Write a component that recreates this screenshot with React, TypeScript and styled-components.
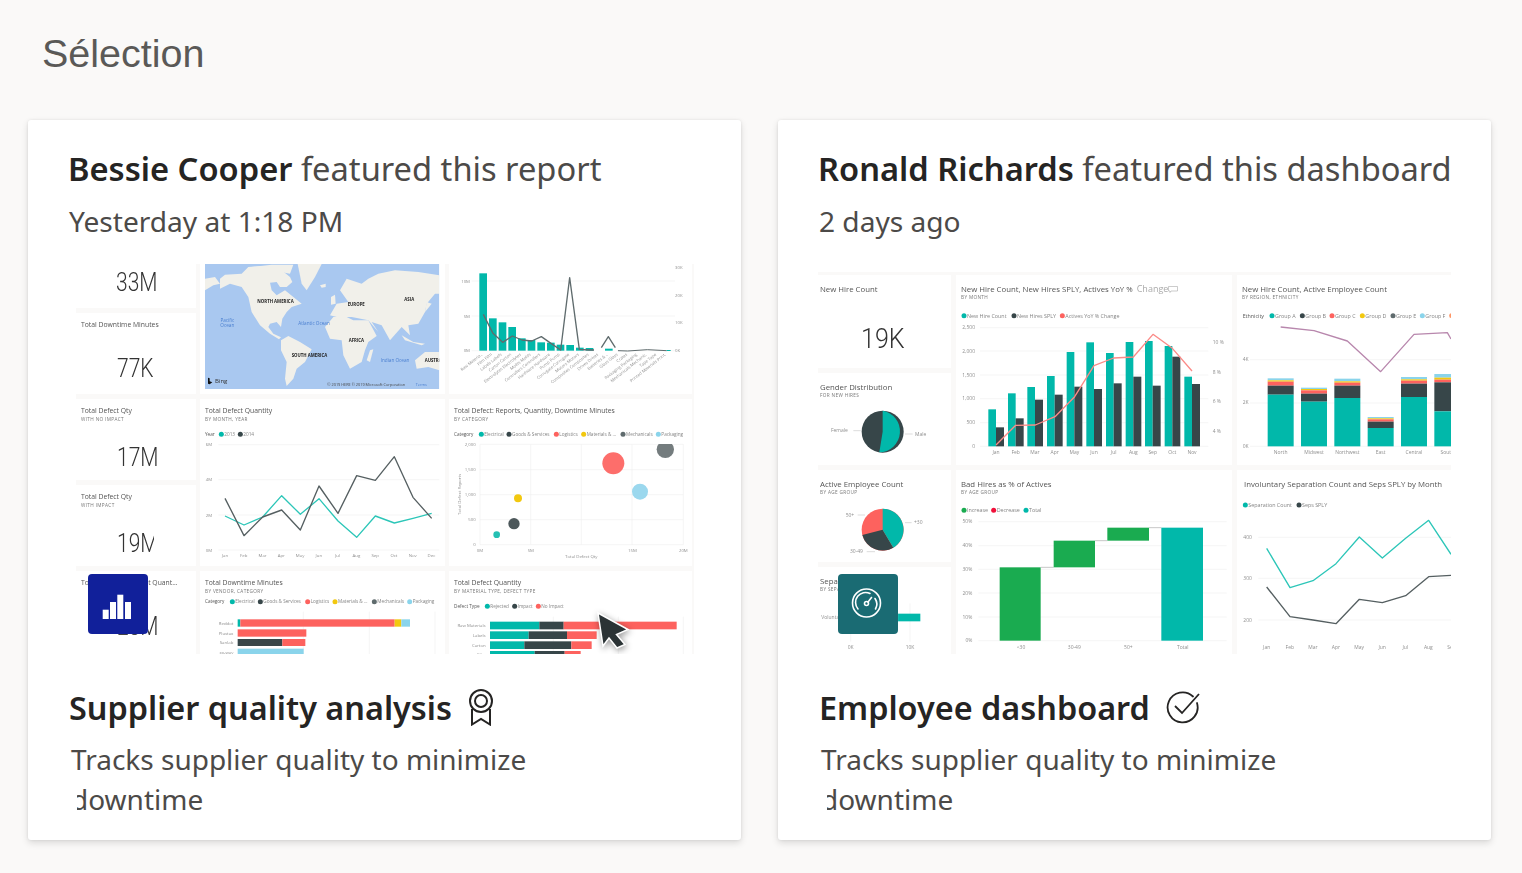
import React, { createContext, useContext } from 'react';
import styled, { createGlobalStyle } from 'styled-components';

const TEAL = '#01b8aa';
const DARK = '#374649';
const RED = '#fd625e';
const YELLOW = '#f2c80f';
const GREY = '#5f6b6d';
const BLUE = '#8ad4eb';
const GREEN = '#1aab50';

// the second thumbnail is a larger dashboard, its chart labels run bigger
const LabelScale = createContext(1);

const GlobalStyle = createGlobalStyle`
  html, body {
    margin: 0;
    height: 100%;
    background: #faf9f8;
    overflow: hidden;
  }
`;

const Page = styled.main`
  width: 1522px;
  height: 873px;
  box-sizing: border-box;
  padding: 28px 0 0 28px;
`;

const PageTitle = styled.h1`
  margin: 0 0 0 14px;
  height: 92px;
  font: 400 39.5px/50px 'Liberation Sans', Arial, sans-serif;
  color: #5a5957;
`;

const CardRow = styled.div`
  display: flex;
  gap: 37px;
`;

const Card = styled.article`
  width: 713px;
  height: 720px;
  box-sizing: border-box;
  padding-top: 29px;
  background: #fff;
  border-radius: 3px;
  box-shadow: 0 3px 7px rgba(0, 0, 0, 0.13), 0 0 3px rgba(0, 0, 0, 0.08);
  font-family: 'Noto Sans', 'Open Sans', sans-serif;
`;

const Headline = styled.div`
  margin-left: 40px;
  font-size: 32.65px;
  line-height: 40px;
  color: #4c4a48;
  white-space: nowrap;
`;

const Author = styled.strong`
  font-weight: 600;
  color: #252423;
`;

const When = styled.div`
  margin: 12px 0 0 41px;
  font-size: 28.1px;
  line-height: 40px;
  color: #4c4a48;
`;

const Thumb = styled.div<{ $left: number; $top: number; $pad: number; $width: number; $titleSize: number; $headPad: number }>`
  --title-size: ${p => p.$titleSize}px;
  --head-pad: ${p => p.$headPad}px;
  position: relative;
  display: flex;
  gap: 4px;
  box-sizing: border-box;
  margin: ${p => p.$top}px 0 0 ${p => p.$left}px;
  padding-top: ${p => p.$pad}px;
  width: ${p => p.$width}px;
  height: ${p => 413 - p.$top}px;
  overflow: hidden;
  background: #faf9f8;
  filter: blur(0.35px);
`;

const Column = styled.div<{ $gap?: number }>`
  display: flex;
  flex-direction: column;
  gap: 5px;
  margin-right: ${p => p.$gap ?? 0}px;
`;

const Frame = styled.section<{ $w: number; $h: number }>`
  width: ${p => p.$w}px;
  height: ${p => p.$h}px;
  flex: none;
  display: flex;
  flex-direction: column;
  overflow: hidden;
  background: #fff;
  font-family: 'Open Sans', 'Noto Sans', sans-serif;
`;

const TileHead = styled.header<{ $h: number; $inset: number }>`
  height: ${p => p.$h}px;
  flex: none;
  box-sizing: border-box;
  padding: var(--head-pad) 0 0 ${p => p.$inset}px;
`;

const TileTitle = styled.div`
  display: flex;
  align-items: center;
  font-size: var(--title-size);
  line-height: 10px;
  color: #555;
  white-space: nowrap;
`;

const Faded = styled.span`
  margin-left: 4px;
  font-size: 9px;
  color: #aaa;
`;

const TileSub = styled.div`
  font-size: 4.7px;
  line-height: 6px;
  letter-spacing: 0.35px;
  color: #777;
  white-space: nowrap;
`;

const KpiValue = styled.div<{ $bottom: number; $left: number; $clip?: number; $size: number; $squeeze: number }>`
  margin-top: auto;
  margin-left: ${p => p.$left}px;
  margin-bottom: ${p => p.$bottom - 16}px;
  width: ${p => p.$clip ?? 70}px;
  overflow: hidden;
  transform: scaleX(${p => p.$squeeze});
  transform-origin: left center;
  font-family: Roboto, 'Open Sans', sans-serif;
  font-size: ${p => p.$size}px;
  line-height: 32px;
  font-weight: 300;
  color: #333;
  white-space: nowrap;
`;

const ChartSvg = styled.svg`
  display: block;
  flex: none;
  font-family: 'Open Sans', 'Noto Sans', sans-serif;
`;

const Badge = styled.div<{ $bg: string; $left: number }>`
  position: absolute;
  left: ${p => p.$left}px;
  bottom: 20px;
  width: 60px;
  height: 60px;
  border-radius: 4px;
  background: ${p => p.$bg};
  box-shadow: 0 0 1px rgba(255, 255, 255, 0.8);
`;

const Cursor = styled.svg`
  position: absolute;
  left: 515px;
  top: 346px;
  filter: drop-shadow(1px 2px 3px rgba(0, 0, 0, 0.4));
`;

const ItemTitle = styled.h2<{ $gap: number }>`
  display: flex;
  align-items: center;
  gap: ${p => p.$gap}px;
  margin: 33px 0 0 41px;
  height: 40px;
  font-size: 32.4px;
  line-height: 40px;
  font-weight: 600;
  color: #252423;
`;

const Description = styled.p`
  margin: 12px 0 0 43px;
  font-size: 28px;
  line-height: 40px;
  color: #4c4a48;
`;

const ClippedLine = styled.span`
  display: block;
  clip-path: inset(0 0 0 6px);
`;

type Origin = [number, number];

const Tile: React.FC<{
  w: number;
  h: number;
  x: number;
  y: number;
  origin: Origin;
  head?: number;
  inset?: number;
  title?: React.ReactNode;
  sub?: string;
  children?: React.ReactNode;
}> = ({ w, h, x, y, origin, head = 24, inset = 5, title, sub, children }) => {
  // charts are plotted in the coordinates of a 3x crop of the thumbnail
  const vb = `${(x - origin[0]) * 3} ${(y + head - origin[1]) * 3} ${w * 3} ${(h - head) * 3}`;
  return (
    <Frame $w={w} $h={h}>
      {head > 0 && (
        <TileHead $h={head} $inset={inset}>
          <TileTitle>{title}</TileTitle>
          {sub && <TileSub>{sub}</TileSub>}
        </TileHead>
      )}
      <ChartSvg width={w} height={h - head} viewBox={vb} aria-hidden>
        {children}
      </ChartSvg>
    </Frame>
  );
};

const Kpi: React.FC<{
  w: number;
  h: number;
  title?: string;
  sub?: string;
  value: string;
  bottom: number;
  left: number;
  clip?: number;
  inset?: number;
  size?: number;
  squeeze?: number;
}> = ({ w, h, title, sub, value, bottom, left, clip, inset = 5, size = 25, squeeze = 0.84 }) => (
  <Frame $w={w} $h={h}>
    {title && (
      <TileHead $h={24} $inset={inset}>
        <TileTitle>{title}</TileTitle>
        {sub && <TileSub>{sub}</TileSub>}
      </TileHead>
    )}
    <KpiValue $bottom={bottom} $left={left} $clip={clip} $size={size} $squeeze={squeeze}>
      {value}
    </KpiValue>
  </Frame>
);

const Label: React.FC<{ x: number; y: number; end?: boolean; mid?: boolean; size?: number; fill?: string; bold?: boolean; children: React.ReactNode }> = ({
  x,
  y,
  end,
  mid,
  size = 13,
  fill = '#8f8f8f',
  bold,
  children,
}) => {
  const scale = useContext(LabelScale);
  const px = size * scale;
  return (
    <text x={x} y={y + px * 0.35} fontSize={px} fill={fill} fontWeight={bold ? 700 : 400} textAnchor={end ? 'end' : mid ? 'middle' : 'start'}>
      {children}
    </text>
  );
};

const Legend: React.FC<{ y: number; title?: [number, string]; items: [number, string, string][] }> = ({ y, title, items }) => (
  <g>
    {title && (
      <Label x={title[0]} y={y} fill="#555" size={14}>
        {title[1]}
      </Label>
    )}
    {items.map(([x, color, text]) => (
      <g key={x}>
        <circle cx={x} cy={y} r={7.5} fill={color} />
        <Label x={x + 9} y={y} size={14} fill="#858585">
          {text}
        </Label>
      </g>
    ))}
  </g>
);

const HGrid: React.FC<{ from: number; to: number; ys: number[] }> = ({ from, to, ys }) => (
  <g stroke="#f0f0f0" strokeWidth={2}>
    {ys.map(y => (
      <line key={y} x1={from} x2={to} y1={y} y2={y} />
    ))}
  </g>
);

const VGrid: React.FC<{ xs: number[]; from: number; to: number }> = ({ xs, from, to }) => (
  <g stroke="#f0f0f0" strokeWidth={2}>
    {xs.map(x => (
      <line key={x} x1={x} x2={x} y1={from} y2={to} />
    ))}
  </g>
);

const Line: React.FC<{ pts: number[][]; color: string; width?: number }> = ({ pts, color, width = 4 }) => (
  <polyline points={pts.map(p => p.join(',')).join(' ')} fill="none" stroke={color} strokeWidth={width} strokeLinejoin="round" />
);

const Bar: React.FC<{ x0: number; x1: number; y0: number; y1: number; fill: string }> = ({ x0, x1, y0, y1, fill }) => (
  <rect x={x0} y={y0} width={x1 - x0} height={y1 - y0} fill={fill} />
);

const MONTHS = ['Jan', 'Feb', 'Mar', 'Apr', 'May', 'Jun', 'Jul', 'Aug', 'Sep', 'Oct', 'Nov', 'Dec'];

const LAND = [
  '0,50 30,45 45,65 25,70 0,85',
  '45,50 60,38 110,35 130,15 170,12 230,25 255,45 262,60 245,75 225,75 215,60 195,62 200,85 215,100 240,85 265,105 290,125 260,135 245,150 232,170 228,195 215,180 195,185 190,195 205,215 228,226 222,232 195,215 165,190 140,150 130,105 110,75 75,65 45,80',
  '140,15 200,8 265,8 255,35 200,25',
  '278,6 350,6 330,45 305,85 290,65',
  '345,70 362,65 362,75 350,77',
  '378,105 390,98 392,125 378,128',
  '228,235 250,222 285,240 320,262 300,300 275,320 265,350 245,372 240,350 245,300 228,265',
  '360,195 385,165 425,165 445,175 490,175 515,222 490,240 480,265 470,300 435,320 415,280 410,235 375,230',
  '375,160 395,125 430,120 405,85 425,50 470,65 490,50 520,35 570,25 640,30 703,40 703,95 690,95 665,125 660,150 640,185 610,190 615,220 590,195 555,235 530,190 500,180 520,210 490,175 440,165 395,165',
  '495,265 505,262 495,300 485,295',
  '665,120 680,125 660,150',
  '590,220 625,240 660,245 650,250 600,235',
  '630,295 660,270 703,270 703,325 670,315 635,320',
];

const WorldMap = () => (
  <g>
    <rect x={0} y={6} width={703} height={375} fill="#a9c8f0" />
    <g fill="#f1f0ea">
      {LAND.map(pts => (
        <polygon key={pts} points={pts} />
      ))}
    </g>
    <Label x={157} y={117} fill="#222" size={13} bold>NORTH AMERICA</Label>
    <Label x={428} y={126} fill="#222" size={13} bold>EUROPE</Label>
    <Label x={598} y={111} fill="#222" size={13} bold>ASIA</Label>
    <Label x={431} y={235} fill="#222" size={13} bold>AFRICA</Label>
    <Label x={260} y={281} fill="#222" size={13} bold>SOUTH AMERICA</Label>
    <Label x={659} y={294} fill="#222" size={13} bold>AUSTRALIA</Label>
    <rect x={703} y={6} width={30} height={380} fill="#fff" />
    <Label x={67} y={174} fill="#4a7fd0" size={14} mid>Pacific</Label>
    <Label x={67} y={191} fill="#4a7fd0" size={14} mid>Ocean</Label>
    <Label x={280} y={183} fill="#4a7fd0" size={14}>Atlantic Ocean</Label>
    <Label x={527} y={294} fill="#4a7fd0" size={14}>Indian Ocean</Label>
    <path d="M9 347l5 2v9l8 3-8 6-5-2z" fill="#111" />
    <Label x={30} y={357} fill="#333" size={18}>Bing</Label>
    <Label x={367} y={367} fill="#444" size={11.500}>© 2019 HERE © 2019 Microsoft Corporation</Label>
    <Label x={632} y={367} fill="#4a7fd0" size={11.500}>Terms</Label>
  </g>
);

const PARTS = ['Raw Materia..', 'Film Film', 'Labels Labels', 'Carton Carton', 'Electrolytes Electrolytes', 'Molds Molds', 'Controllers Controllers', 'Hardware Hardware', 'Pump Pump', 'Corrugate Corrugate', 'Motors Motors', 'Composites Composites', 'Drives Drives', 'Batteries & ..', 'Glass Glass', 'Crates', 'Packaging Packaging', 'Mechanicals Mechanic.', 'Tape Tape', 'Printed Materials Print.'];
const PART_TOPS = [55, 190, 202, 216, 250, 255, 262, 263, 269, 270, 278, 279];

const ParetoChart = () => (
  <g>
    <HGrid from={95} to={705} ys={[78, 183, 287]} />
    <Label x={90} y={78} end>10M</Label>
    <Label x={90} y={183} end>5M</Label>
    <Label x={90} y={287} end>0M</Label>
    <Label x={705} y={37}>30K</Label>
    <Label x={705} y={120}>20K</Label>
    <Label x={705} y={203}>10K</Label>
    <Label x={705} y={287}>0K</Label>
    {PART_TOPS.map((top, i) => (
      <Bar key={i} x0={118 + i * 29} x1={141 + i * 29} y0={top} y1={287} fill={TEAL} />
    ))}
    <Line
      color={GREY}
      pts={[[130, 178], [159, 235], [188, 262], [217, 243], [246, 255], [275, 258], [304, 245], [333, 265], [362, 285], [389, 68], [418, 283], [447, 285], [476, 285]]}
    />
    <rect x={462} y={235} width={70} height={70} fill="#fff" />
    <Bar x0={495} x1={518} y0={281} y1={287} fill={TEAL} />
    <Line color={GREY} pts={[[484, 278], [505, 245], [526, 278]]} />
    <Line color={GREY} pts={[[534, 287], [563, 288], [622, 284], [680, 287]]} width={3} />
    <Bar x0={680} x1={692} y0={285} y1={288} fill={TEAL} />
    {PARTS.map((t, i) => (
      <text key={t} x={128 + i * 29} y={300} fontSize={12.5} fill="#959595" textAnchor="end" transform={`rotate(-38 ${128 + i * 29} 300)`}>
        {t}
      </text>
    ))}
  </g>
);

const DefectLine = () => (
  <g>
    <Legend y={538} title={[435, 'Year']} items={[[484, TEAL, '2013'], [541, DARK, '2014']]} />
    <HGrid from={475} to={1138} ys={[569, 674, 780, 885]} />
    {['6M', '4M', '2M', '0M'].map((t, i) => (
      <Label key={t} x={437} y={[569, 674, 780, 885][i]}>{t}</Label>
    ))}
    {MONTHS.map((m, i) => (
      <Label key={m} x={495 + i * 56.3} y={902} mid>{m}</Label>
    ))}
    <Line color="#2cc6b8" pts={[[495, 783], [552, 810], [608, 786], [665, 722], [721, 778], [777, 731], [834, 798], [890, 847], [946, 783], [1003, 804], [1059, 790], [1115, 775]]} />
    <Line color="#555f61" pts={[[495, 730], [552, 842], [608, 786], [665, 765], [721, 825], [777, 693], [834, 775], [890, 662], [946, 676], [1003, 605], [1059, 727], [1115, 790]]} />
  </g>
);

const VendorBars = () => (
  <g>
    <Legend
      y={1040}
      title={[435, 'Category']}
      items={[[517, TEAL, 'Electrical'], [601, DARK, 'Goods & Services'], [743, RED, 'Logistics'], [825, YELLOW, 'Materials & ...'], [943, GREY, 'Mechanicals'], [1049, BLUE, 'Packaging']]}
    />
    <VGrid xs={[730, 928, 1125]} from={1070} to={1200} />
    <Label x={520} y={1104} end>Reddot</Label>
    <Label x={520} y={1134} end>Plustax</Label>
    <Label x={520} y={1163} end>Sanlab</Label>
    <Label x={520} y={1192} end>xx-way</Label>
    <Bar x0={533} x1={541} y0={1093} y1={1115} fill={TEAL} />
    <Bar x0={541} x1={1004} y0={1093} y1={1115} fill={RED} />
    <Bar x0={1004} x1={1024} y0={1093} y1={1115} fill={YELLOW} />
    <Bar x0={1024} x1={1050} y0={1093} y1={1115} fill={BLUE} />
    <Bar x0={533} x1={739} y0={1123} y1={1145} fill={RED} />
    <Bar x0={533} x1={667} y0={1152} y1={1173} fill={DARK} />
    <Bar x0={667} x1={736} y0={1152} y1={1173} fill={RED} />
    <Bar x0={533} x1={731} y0={1181} y1={1198} fill={BLUE} />
  </g>
);

const Scatter = () => (
  <g>
    <HGrid from={120} to={730} ys={[568, 644, 719, 794, 869]} />
    <VGrid xs={[120, 272, 424, 576, 730]} from={568} to={869} />
    <circle cx={676} cy={583} r={26} fill="#747c7e" />
    <rect x={640} y={545} width={80} height={22} fill="#fff" />
    <Legend
      y={538}
      title={[42, 'Category']}
      items={[[124, TEAL, 'Electrical'], [207, DARK, 'Goods & Services'], [349, RED, 'Logistics'], [431, YELLOW, 'Materials & ...'], [549, GREY, 'Mechanicals'], [655, BLUE, 'Packaging']]}
    />
    {['2,000', '1,500', '1,000', '500', '0'].map((t, i) => (
      <Label key={t} x={107} y={568 + i * 75.3} end>{t}</Label>
    ))}
    {['0M', '5M', '', '15M', '20M'].map((t, i) => (
      <Label key={i} x={120 + i * 152.5} y={885} mid>{t}</Label>
    ))}
    <Label x={424} y={905} mid>Total Defect Qty</Label>
    <text x={62} y={718} fontSize={13} fill="#8f8f8f" textAnchor="middle" transform="rotate(-90 62 718)">Total Defect Reports</text>
    <circle cx={520} cy={625} r={33} fill="#fd6e6b" />
    <circle cx={600} cy={710} r={24} fill="#9bd8ee" />
    <circle cx={234} cy={730} r={12} fill={YELLOW} />
    <circle cx={222} cy={806} r={17} fill="#4d585b" />
    <circle cx={170} cy={839} r={10} fill="#25c0b3" />
  </g>
);

const MaterialBars = () => {
  const rows: [string, number, number, number, number, number][] = [
    ['Raw Materials', 1100, 1123, 298, 371, 710],
    ['Labels', 1129, 1152, 266, 381, 470],
    ['Carton', 1159, 1182, 253, 394, 455],
    ['Film', 1188, 1211, 284, 374, 422],
  ];
  return (
    <g>
      <Legend y={1054} title={[42, 'Defect Type']} items={[[142, TEAL, 'Rejected'], [224, DARK, 'Impact'], [295, RED, 'No Impact']]} />
      <VGrid xs={[340, 535, 730]} from={1085} to={1200} />
      {rows.map(([name, y0, y1, a, b, c]) => (
        <g key={name}>
          <Label x={137} y={(y0 + y1) / 2} end>{name}</Label>
          <Bar x0={150} x1={a} y0={y0} y1={y1} fill={TEAL} />
          <Bar x0={a} x1={b} y0={y0} y1={y1} fill={DARK} />
          <Bar x0={b} x1={c} y0={y0} y1={y1} fill={RED} />
        </g>
      ))}
    </g>
  );
};

const GenderPie = () => (
  <g>
    <circle cx={218} cy={500} r={63} fill={DARK} />
    <path d="M218 500V437A63 63 0 0 1 208 562Z" fill={TEAL} />
    <Label x={63} y={497}>Female</Label>
    <Label x={315} y={507}>Male</Label>
    <path d="M130 497h22M285 507h23" stroke="#ccc" strokeWidth={2} />
  </g>
);

const HIRES: [number, number, number][] = [
  [535, 433, 487], [594, 385, 460], [652, 366, 404], [711, 333, 389], [770, 261, 365], [829, 232, 372],
  [888, 264, 355], [947, 231, 335], [1005, 228, 362], [1064, 243, 275], [1123, 335, 357],
];

const HireBars = () => (
  <g>
    <Legend y={152} items={[[462, TEAL, 'New Hire Count'], [612, DARK, 'New Hires SPLY'], [757, RED, 'Actives YoY % Change']]} />
    <HGrid from={510} to={1195} ys={[188, 258, 330, 401, 473, 544]} />
    {['2,500', '2,000', '1,500', '1,000', '500', '0'].map((t, i) => (
      <Label key={t} x={495} y={[188, 258, 330, 401, 473, 543][i]} end>{t}</Label>
    ))}
    {['10 %', '8 %', '6 %', '4 %'].map((t, i) => (
      <Label key={t} x={1208} y={[231, 321, 410, 499][i]}>{t}</Label>
    ))}
    {HIRES.map(([x, a, b], i) => (
      <g key={x}>
        <Bar x0={x} x1={x + 23} y0={a} y1={544} fill={TEAL} />
        <Bar x0={x + 23} x1={x + 47} y0={b} y1={544} fill={DARK} />
        <Label x={x + 23} y={563} mid>{MONTHS[i]}</Label>
      </g>
    ))}
    <Line color="#fb8a87" width={4} pts={[[558, 540], [617, 481], [676, 480], [735, 455], [794, 395], [852, 302], [911, 279], [970, 276], [1029, 208], [1087, 250], [1146, 318]]} />
  </g>
);

const STACKS: [string, number, number[]][] = [
  ['North', 113, [389, 362, 350, 346, 340]],
  ['Midwest', 213, [410, 386, 376, 372, 368]],
  ['Northwest', 313, [399, 362, 353, 349, 341]],
  ['East', 413, [489, 470, 463, 460, 456]],
  ['Central', 513, [396, 356, 347, 343, 336]],
  ['South', 613, [439, 352, 344, 338, 327]],
];

const RegionStack = () => (
  <g>
    <Legend
      y={152}
      title={[38, 'Ethnicity']}
      items={[[126, TEAL, 'Group A'], [217, DARK, 'Group B'], [306, RED, 'Group C'], [397, YELLOW, 'Group D'], [489, GREY, 'Group E'], [577, BLUE, 'Group F'], [665, '#fe9666', '']]}
    />
    <HGrid from={60} to={663} ys={[284, 414, 544]} />
    <Label x={38} y={283}>4K</Label>
    <Label x={38} y={413}>2K</Label>
    <Label x={38} y={543}>0K</Label>
    {STACKS.map(([name, x, [a, b, c, d, e]]) => (
      <g key={name}>
        <Bar x0={x} x1={x + 78} y0={e} y1={d} fill={BLUE} />
        <Bar x0={x} x1={x + 78} y0={d} y1={c} fill={YELLOW} />
        <Bar x0={x} x1={x + 78} y0={c} y1={b} fill={RED} />
        <Bar x0={x} x1={x + 78} y0={b} y1={a} fill={DARK} />
        <Bar x0={x} x1={x + 78} y0={a} y1={544} fill={TEAL} />
        <Label x={x + 39} y={563} mid>{name}</Label>
      </g>
    ))}
    <Line color="#b887ad" pts={[[152, 186], [252, 197], [352, 228], [452, 320], [552, 208], [652, 203], [663, 222]]} />
  </g>
);

const AgePie = () => (
  <g>
    <circle cx={218} cy={194} r={63} fill={RED} />
    <path d="M218 194L157 210A63 63 0 0 0 250 248Z" fill={DARK} />
    <path d="M218 194V131A63 63 0 0 1 250 248Z" fill={TEAL} />
    <Label x={107} y={150}>50+</Label>
    <Label x={312} y={172}>+30</Label>
    <Label x={120} y={260}>30-49</Label>
    <path d="M143 150h22M285 173h20M170 260h25" stroke="#ccc" strokeWidth={2} />
  </g>
);

const SeparationBar = () => (
  <g>
    <VGrid xs={[122, 300]} from={415} to={530} />
    <Label x={34} y={457}>Voluntary</Label>
    <Bar x0={122} x1={331} y0={446} y1={469} fill={TEAL} />
    <Label x={122} y={547} mid>0K</Label>
    <Label x={300} y={547} mid>10K</Label>
  </g>
);

const Waterfall = () => (
  <g>
    <Legend y={136} items={[[462, GREEN, 'Increase'], [551, '#f0103a', 'Decrease'], [648, TEAL, 'Total']]} />
    <HGrid from={505} to={1250} ys={[170, 242, 313, 384, 456, 527]} />
    {['50%', '40%', '30%', '20%', '10%', '0%'].map((t, i) => (
      <Label key={t} x={487} y={[170, 242, 313, 384, 456, 527][i]} end>{t}</Label>
    ))}
    <path d="M692 307h39M855 227h37M1017 188h37" stroke="#aaa" strokeWidth={2} />
    <Bar x0={569} x1={692} y0={307} y1={527} fill={GREEN} />
    <Bar x0={731} x1={855} y0={227} y1={307} fill={GREEN} />
    <Bar x0={892} x1={1017} y0={188} y1={227} fill={GREEN} />
    <Bar x0={1054} x1={1179} y0={188} y1={527} fill={TEAL} />
    <Label x={633} y={547} mid>&lt;30</Label>
    <Label x={793} y={547} mid>30-49</Label>
    <Label x={955} y={547} mid>50+</Label>
    <Label x={1118} y={547} mid>Total</Label>
  </g>
);

const SeparationLines = () => (
  <g>
    <Legend y={720} items={[[46, TEAL, 'Separation Count'], [207, DARK, 'Seps SPLY']]} />
    <HGrid from={85} to={663} ys={[817, 940, 1065]} />
    <Label x={40} y={817}>400</Label>
    <Label x={40} y={940}>300</Label>
    <Label x={40} y={1065}>200</Label>
    {MONTHS.slice(0, 9).map((m, i) => (
      <Label key={m} x={110 + i * 69.3} y={1147} mid>{m}</Label>
    ))}
    <Line color="#2cc6b8" pts={[[110, 850], [180, 968], [249, 947], [318, 896], [388, 816], [457, 879], [527, 820], [596, 766], [663, 868]]} />
    <Line color="#555f61" pts={[[110, 966], [180, 1055], [249, 1065], [318, 1076], [388, 1003], [457, 1013], [527, 992], [596, 935], [663, 931]]} />
  </g>
);

const ReportIcon = () => (
  <svg width="60" height="60" viewBox="0 0 60 60" fill="#fff">
    <rect x="14.7" y="35.7" width="6" height="9.3" />
    <rect x="22" y="28" width="6" height="17" />
    <rect x="29.3" y="20.7" width="6" height="24.3" />
    <rect x="37" y="28" width="6" height="17" />
  </svg>
);

const GaugeIcon = () => (
  <svg width="60" height="60" viewBox="0 0 60 60" fill="none" stroke="#fff" strokeWidth="1.6" strokeLinecap="round">
    <circle cx="28.5" cy="29" r="14" />
    <path d="M20 35a10 10 0 0 1 12-15.500M37 24.500a10 10 0 0 1 .5 10.500" />
    <circle cx="28.5" cy="29.500" r="2" />
    <path d="M30 28l3.500-4.500" />
  </svg>
);

const CommentIcon = () => (
  <svg width="10" height="7" viewBox="0 0 10 7" fill="none" stroke="#aaa" strokeWidth="0.6">
    <path d="M.5.5h9v4.500h-6.500l-1 1.500v-1.500h-1.500z" />
  </svg>
);

const MedalIcon = () => (
  <svg width="26" height="37" viewBox="0 0 26 37" fill="none" stroke="#252423" strokeWidth="2">
    <circle cx="13" cy="12" r="11" />
    <circle cx="13" cy="12" r="6" />
    <path d="M4 20v15.500l9-5.500 9 5.500V20" />
  </svg>
);

const ApprovedIcon = () => (
  <svg width="34" height="34" viewBox="0 0 34 34" fill="none" stroke="#252423" strokeWidth="1.8">
    <path d="M27 6.500A15 15 0 1 0 31 13" strokeLinecap="round" />
    <path d="M9 16l7 7L33 4" />
  </svg>
);

const App: React.FC = () => {
  const MAP: Origin = [205, 262];
  const L: Origin = [60, 255];
  const M: Origin = [440, 255];
  const R1: Origin = [810, 265];
  const R2: Origin = [810, 465];
  const R3: Origin = [1230, 265];

  return (
    <Page>
      <GlobalStyle />
      <PageTitle>Sélection</PageTitle>
      <CardRow>
        <Card>
          <Headline>
            <Author>Bessie Cooper</Author> featured this report
          </Headline>
          <When>Yesterday at 1:18 PM</When>
          <Thumb $left={48} $top={23} $pad={0} $width={618} $titleSize={6.8} $headPad={7}>
            <Column>
              <Kpi w={120} h={44} value="33M" bottom={25} left={40} />
              <Kpi w={120} h={81} title="Total Downtime Minutes" value="77K" bottom={25} left={41} />
              <Kpi w={120} h={81} title="Total Defect Qty" sub="WITH NO IMPACT" value="17M" bottom={22} left={41} />
              <Kpi w={120} h={81} title="Total Defect Qty" sub="WITH IMPACT" value="19M" bottom={22} left={41} clip={44} />
              <Kpi w={120} h={83} title="Total Impacted Defect Quant..." value="23M" bottom={27} left={41} />
            </Column>
            <Column>
              <Tile w={245} h={130} x={200} y={264} origin={MAP} head={0}>
                <WorldMap />
              </Tile>
              <Tile w={245} h={167} x={200} y={399} origin={L} title="Total Defect Quantity" sub="BY MONTH, YEAR">
                <DefectLine />
              </Tile>
              <Tile w={245} h={83} x={200} y={571} origin={L} title="Total Downtime Minutes" sub="BY VENDOR, CATEGORY">
                <VendorBars />
              </Tile>
            </Column>
            <Column>
              <Tile w={243} h={130} x={449} y={264} origin={M} head={0}>
                <ParetoChart />
              </Tile>
              <Tile w={243} h={167} x={449} y={399} origin={M} title="Total Defect: Reports, Quantity, Downtime Minutes" sub="BY CATEGORY">
                <Scatter />
              </Tile>
              <Tile w={243} h={83} x={449} y={571} origin={M} title="Total Defect Quantity" sub="BY MATERIAL TYPE, DEFECT TYPE">
                <MaterialBars />
              </Tile>
            </Column>
            <Badge $bg="#11209a" $left={12}>
              <ReportIcon />
            </Badge>
            <Cursor width="46" height="46" viewBox="0 0 46 46">
              <path d="M7 3l30 16.500-11.500 5 8.500 10-8 3.500-8-10-6 8z" fill="#2b3335" stroke="#fff" strokeWidth="1.5" />
            </Cursor>
          </Thumb>
          <ItemTitle $gap={16}>
            Supplier quality analysis
            <MedalIcon />
          </ItemTitle>
          <Description>
            Tracks supplier quality to minimize
            <ClippedLine>downtime</ClippedLine>
          </Description>
        </Card>

        <Card>
          <Headline>
            <Author>Ronald Richards</Author> featured this dashboard
          </Headline>
          <When>2 days ago</When>
          <LabelScale.Provider value={1.15}>
            <Thumb $left={40} $top={31} $pad={3} $width={633} $titleSize={7.8} $headPad={9}>
              <Column $gap={1}>
                <Kpi w={133} h={93} title="New Hire Count" value="19K" bottom={29} left={43} inset={2} size={27} squeeze={0.93} />
                <Tile w={133} h={92} x={818} y={373} origin={R1} title="Gender Distribution" sub="FOR NEW HIRES" inset={2}>
                  <GenderPie />
                </Tile>
                <Tile w={133} h={92} x={818} y={470} origin={R2} title="Active Employee Count" sub="BY AGE GROUP" inset={2}>
                  <AgePie />
                </Tile>
                <Tile w={133} h={87} x={818} y={567} origin={R2} title="Separation Count" sub="BY SEPARATION TYPE" inset={2}>
                  <SeparationBar />
                </Tile>
              </Column>
              <Column $gap={1}>
                <Tile
                  w={276}
                  h={190}
                  x={956}
                  y={275}
                  origin={R1}
                  inset={5}
                  title={
                    <>
                      New Hire Count, New Hires SPLY, Actives YoY %<Faded>Change</Faded>
                      <CommentIcon />
                    </>
                  }
                  sub="BY MONTH"
                >
                  <HireBars />
                </Tile>
                <Tile w={276} h={184} x={956} y={470} origin={R2} title="Bad Hires as % of Actives" sub="BY AGE GROUP">
                  <Waterfall />
                </Tile>
              </Column>
              <Column>
                <Tile w={214} h={190} x={1237} y={275} origin={R3} title="New Hire Count, Active Employee Count" sub="BY REGION, ETHNICITY">
                  <RegionStack />
                </Tile>
                <Tile w={214} h={184} x={1237} y={470} origin={R3} head={18} inset={7} title="Involuntary Separation Count and Seps SPLY by Month">
                  <SeparationLines />
                </Tile>
              </Column>
              <Badge $bg="#1a6b73" $left={20}>
                <GaugeIcon />
              </Badge>
            </Thumb>
          </LabelScale.Provider>
          <ItemTitle $gap={16}>
            Employee dashboard
            <ApprovedIcon />
          </ItemTitle>
          <Description>
            Tracks supplier quality to minimize
            <ClippedLine>downtime</ClippedLine>
          </Description>
        </Card>
      </CardRow>
    </Page>
  );
};

export default App;
